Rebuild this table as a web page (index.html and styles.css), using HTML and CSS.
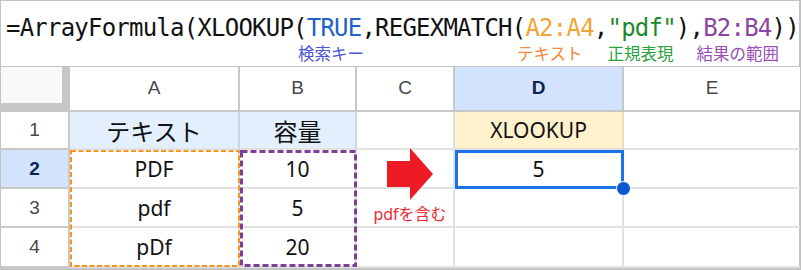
FILE: index.html
```html
<!DOCTYPE html>
<html lang="ja">
<head>
<meta charset="utf-8">
<title>XLOOKUP REGEXMATCH</title>
<link rel="stylesheet" href="styles.css">
</head>
<body>
<div class="sheet">
  <div class="formula-bar">
    <div class="formula">=ArrayFormula(XLOOKUP(<span class="t-blue">TRUE</span>,REGEXMATCH(<span class="t-orange">A2:A4</span>,<span class="t-green">"pdf"</span>),<span class="t-purple">B2:B4</span>))</div>
    <div class="notes">
      <span class="note n-key">検索キー</span>
      <span class="note n-text">テキスト</span>
      <span class="note n-regex">正規表現</span>
      <span class="note n-result">結果の範囲</span>
    </div>
  </div>
  <div class="grid">
    <div class="row hdr">
      <div class="corner"></div>
      <div class="ch">A</div>
      <div class="ch">B</div>
      <div class="ch">C</div>
      <div class="ch ch-sel">D</div>
      <div class="ch">E</div>
    </div>
    <div class="row r1">
      <div class="rh">1</div>
      <div class="cell jp head-a">テキスト</div>
      <div class="cell jp head-b">容量</div>
      <div class="cell"></div>
      <div class="cell head-d">XLOOKUP</div>
      <div class="cell"></div>
    </div>
    <div class="row r2">
      <div class="rh rh-sel">2</div>
      <div class="cell">PDF</div>
      <div class="cell">10</div>
      <div class="cell"></div>
      <div class="cell">5</div>
      <div class="cell"></div>
    </div>
    <div class="row r3">
      <div class="rh">3</div>
      <div class="cell">pdf</div>
      <div class="cell">5</div>
      <div class="cell"></div>
      <div class="cell"></div>
      <div class="cell"></div>
    </div>
    <div class="row r4">
      <div class="rh">4</div>
      <div class="cell">pDf</div>
      <div class="cell">20</div>
      <div class="cell"></div>
      <div class="cell"></div>
      <div class="cell"></div>
    </div>

    <div class="range range-a">
      <svg width="170" height="118" viewBox="0 0 170 118"><rect x="1" y="1" width="168" height="115" fill="none" stroke="#f7941d" stroke-width="2" stroke-dasharray="5 2.5"/></svg>
    </div>
    <div class="range range-b">
      <svg width="117" height="118" viewBox="0 0 117 118"><rect x="1.5" y="1.5" width="114" height="114" fill="none" stroke="#7f3f98" stroke-width="3" stroke-dasharray="6 3"/></svg>
    </div>
    <div class="sel"><span class="handle"></span></div>
    <div class="callout">
      <svg class="arrow" width="47" height="53" viewBox="0 0 47 53"><polygon points="0,13 23,13 23,0 46,26 23,52 23,39 0,39" fill="#ed1c24"/></svg>
      <span class="callout-text">pdfを含む</span>
    </div>
  </div>
</div>
</body>
</html>
```
FILE: styles.css
```css
* { box-sizing: border-box; }
html, body { margin: 0; padding: 0; background: #fff; }
body { font-family: "Noto Sans", "Noto Sans CJK JP", sans-serif; }

.sheet {
  width: 801px;
  border-top: 1px solid #c4c4c4;
  border-left: 1px solid #c4c4c4;
  border-right: 2px solid #c4c4c4;
  border-bottom: 2px solid #c4c4c4;
}

.formula-bar {
  height: 66px;
  border-bottom: 1px solid #c4c4c4;
  padding: 12px 0 0 5px;
}
.formula {
  font-family: "DejaVu Sans Mono", monospace;
  font-size: 24px;
  letter-spacing: -0.78px;
  line-height: 30px;
  color: #111;
  white-space: nowrap;
}
.t-blue { color: #1f63c6; }
.t-orange { color: #f5a332; }
.t-green { color: #1d8a2a; }
.t-purple { color: #8b45a6; }

.notes {
  display: flex;
  font-family: "Noto Sans CJK JP", sans-serif;
  font-size: 16.5px;
  line-height: 20px;
  margin-top: 0;
}
.note { white-space: nowrap; }
.n-key { margin-left: 292px; color: #4b55d6; }
.n-text { margin-left: 153px; color: #f7873b; }
.n-regex { margin-left: 25px; color: #2aa33e; }
.n-result { margin-left: 23px; color: #9a4eb6; }

.grid {
  display: grid;
  grid-template-columns: 69px 170px 117px 98px 169px 176px;
  grid-template-rows: 45px 38px 39px 39px 40px;
}
.row { display: contents; }
.row > :nth-child(1) { grid-column: 1; }
.row > :nth-child(2) { grid-column: 2; }
.row > :nth-child(3) { grid-column: 3; }
.row > :nth-child(4) { grid-column: 4; }
.row > :nth-child(5) { grid-column: 5; }
.row > :nth-child(6) { grid-column: 6; }
.hdr > * { grid-row: 1; }
.r1 > * { grid-row: 2; }
.r2 > * { grid-row: 3; }
.r3 > * { grid-row: 4; }
.r4 > * { grid-row: 5; }

.corner {
  background: #f8f9fa;
  border-right: 8px solid #c7c7c7;
  border-bottom: 9px solid #c7c7c7;
}
.ch, .rh {
  display: flex;
  align-items: center;
  justify-content: center;
  font-family: "Liberation Sans", Arial, sans-serif;
  font-size: 19px;
  color: #474747;
  border-right: 2px solid #c8c8c8;
  border-bottom: 2px solid #c8c8c8;
  background: #fff;
}
.ch { padding-bottom: 2px; }
.row > .ch:last-child { border-right: none; }
.ch-sel, .rh-sel {
  background: #d3e3fd;
  color: #0b2350;
  font-weight: bold;
}

.cell {
  display: flex;
  align-items: center;
  justify-content: center;
  font-size: 21px;
  color: #111;
  border-right: 2px solid #e1e1e1;
  border-bottom: 2px solid #e1e1e1;
  white-space: nowrap;
}
.row > .cell:last-child { border-right: none; }
.jp { font-family: "Noto Sans CJK JP", sans-serif; font-size: 24px; }
.head-a, .head-b { background: #e3effc; border-right-color: #c9d6e3; }
.head-d { background: #fff2cc; font-size: 21px; border-right-color: #e6dcc0; }

.range {
  grid-column: 2;
  grid-row: 3 / 6;
  z-index: 2;
  pointer-events: none;
}
.range svg { display: block; }
.range-b { grid-column: 3; }

.sel {
  grid-column: 5;
  grid-row: 3;
  border: 3px solid #1a73e8;
  position: relative;
  z-index: 3;
}
.handle {
  position: absolute;
  right: -10px;
  bottom: -10px;
  width: 15px;
  height: 15px;
  border-radius: 50%;
  background: #0b57d0;
  border: 1px solid #fff;
}

.callout {
  grid-column: 4;
  grid-row: 3 / 5;
  display: flex;
  flex-direction: column;
  align-items: center;
  padding-left: 8px;
  z-index: 2;
}
.arrow { display: block; margin-top: -2px; }
.callout-text {
  font-family: "Noto Sans", "Noto Sans CJK JP", sans-serif;
  font-size: 16px;
  line-height: 20px;
  margin-top: 3px;
  color: #ec2b36;
  white-space: nowrap;
}
```
